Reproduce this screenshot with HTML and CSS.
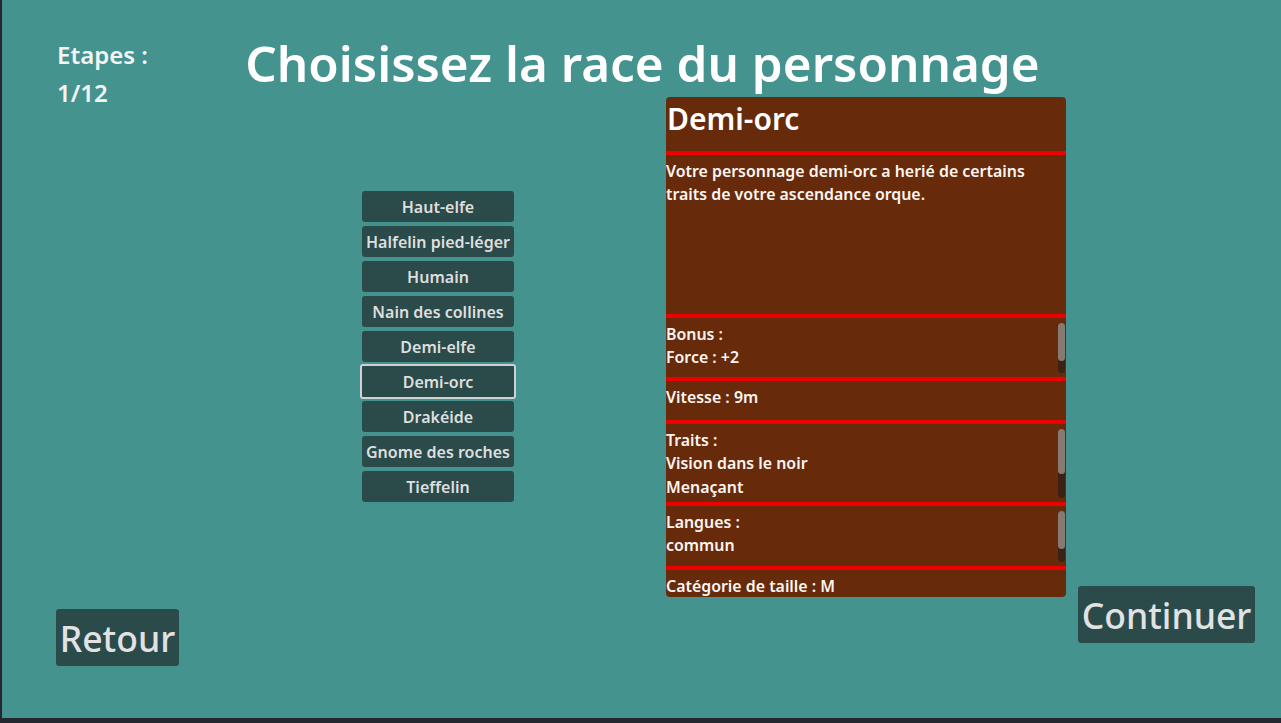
FILE: index.html
```html
<!DOCTYPE html>
<html lang="fr">
<head>
<meta charset="utf-8">
<title>Choix de la race</title>
<link rel="stylesheet" href="styles.css">
</head>
<body>
<div class="frame">
  <main class="screen">
    <div class="steps">Etapes :<br>1/12</div>
    <h1 class="title">Choisissez la race du personnage</h1>

    <ul class="race-list">
      <li class="race">Haut-elfe</li>
      <li class="race">Halfelin pied-léger</li>
      <li class="race">Humain</li>
      <li class="race">Nain des collines</li>
      <li class="race">Demi-elfe</li>
      <li class="race selected">Demi-orc</li>
      <li class="race">Drakéide</li>
      <li class="race">Gnome des roches</li>
      <li class="race">Tieffelin</li>
    </ul>

    <section class="panel">
      <h2 class="panel-title">Demi-orc</h2>
      <div class="sep"></div>
      <div class="sec sec-desc"><p class="txt">Votre personnage demi-orc a herié de certains traits de votre ascendance orque.</p></div>
      <div class="sep"></div>
      <div class="sec sec-bonus"><p class="txt">Bonus :<br>Force : +2</p><div class="scroll"><div class="grab g-bonus"></div></div></div>
      <div class="sep"></div>
      <div class="sec sec-speed"><p class="txt">Vitesse : 9m</p></div>
      <div class="sep"></div>
      <div class="sec sec-traits"><p class="txt">Traits :<br>Vision dans le noir<br>Menaçant</p><div class="scroll"><div class="grab g-traits"></div></div></div>
      <div class="sep"></div>
      <div class="sec sec-lang"><p class="txt">Langues :<br>commun</p><div class="scroll"><div class="grab g-lang"></div></div></div>
      <div class="sep"></div>
      <div class="sec sec-size"><p class="txt">Catégorie de taille : M</p></div>
    </section>

    <button class="big-btn back">Retour</button>
    <button class="big-btn next">Continuer</button>
  </main>
</div>
</body>
</html>
```

FILE: styles.css
```css
html, body {
  margin: 0;
  padding: 0;
  background: #232830;
}

.frame {
  width: 1281px;
  height: 723px;
  padding: 0 0 5px 2px;
  box-sizing: border-box;
}

.screen {
  width: 1279px;
  height: 718px;
  background: #44938f;
  display: grid;
  grid-template-columns: 54px 123px 183px 152px 152px 400px 12px 177px 26px;
  grid-template-rows: 97px 1fr;
  font-family: "Noto Sans", "Open Sans", sans-serif;
  font-weight: 600;
  color: #ffffff;
}

.steps {
  grid-row: 1;
  grid-column: 2 / 4;
  font-size: 24px;
  line-height: 38px;
  padding-top: 36px;
  padding-left: 1px;
  color: #f4f4f4;
}

.title {
  grid-row: 1;
  grid-column: 1 / -1;
  justify-self: center;
  margin: 0;
  padding-top: 28px;
  font-size: 49.4px;
  line-height: 70px;
  font-weight: 600;
  white-space: nowrap;
  padding-left: 2px;
}

.race-list {
  grid-row: 2;
  grid-column: 4;
  align-self: start;
  list-style: none;
  margin: 94px 0 0;
  padding: 0;
  display: flex;
  flex-direction: column;
  gap: 4px;
}

.race {
  height: 30px;
  padding-top: 1px;
  background: #2b4b4b;
  border-radius: 3px;
  color: #dedede;
  font-size: 16px;
  line-height: 31px;
  text-align: center;
  white-space: nowrap;
}

.race.selected {
  margin: -2px -2px;
  border: 2px solid #cfd2d2;
}

.panel {
  grid-row: 2;
  grid-column: 6;
  align-self: start;
  height: 500px;
  background: #672b0b;
  border-radius: 4px;
  display: flex;
  flex-direction: column;
  overflow: hidden;
  color: #fbf6f2;
}

.panel-title {
  flex: none;
  margin: 0;
  height: 54px;
  font-size: 30px;
  font-weight: 600;
  line-height: 44px;
  color: #ffffff;
  padding-left: 1px;
}

.sep {
  height: 4px;
  flex: none;
  background: #ee0000;
}

.sec {
  display: flex;
  flex: none;
  box-sizing: border-box;
}

.txt {
  margin: 0;
  flex: 1;
  padding-top: 5px;
  font-size: 15.9px;
  line-height: 23.3px;
}

.sec-desc { height: 159px; }
.sec-desc .txt { padding-right: 20px; }
.sec-bonus { height: 59px; }
.sec-speed { height: 39px; }
.sec-traits { height: 78px; }
.sec-lang { height: 60px; }
.sec-size { flex: 1 1 0; min-height: 0; overflow: hidden; }

.scroll {
  width: 7px;
  margin: 5px 1px 4px 0;
  background: #3c2214;
  border-radius: 4px;
  display: flex;
  flex-direction: column;
}

.grab {
  background: #877a72;
  border-radius: 4px;
}

.g-bonus { height: 38px; }
.g-traits { height: 45px; }
.g-lang { height: 38px; }

.big-btn {
  grid-row: 2;
  align-self: end;
  height: 57px;
  border: none;
  border-radius: 3px;
  background: #2b4b4b;
  color: #e2e2e2;
  font-family: "Noto Sans", "Open Sans", sans-serif;
  font-weight: 500;
  font-size: 35.5px;
  padding: 0;
  text-align: center;
}

.back {
  grid-column: 2;
  margin-bottom: 52px;
}

.next {
  grid-column: 8;
  margin-bottom: 75px;
}
```
